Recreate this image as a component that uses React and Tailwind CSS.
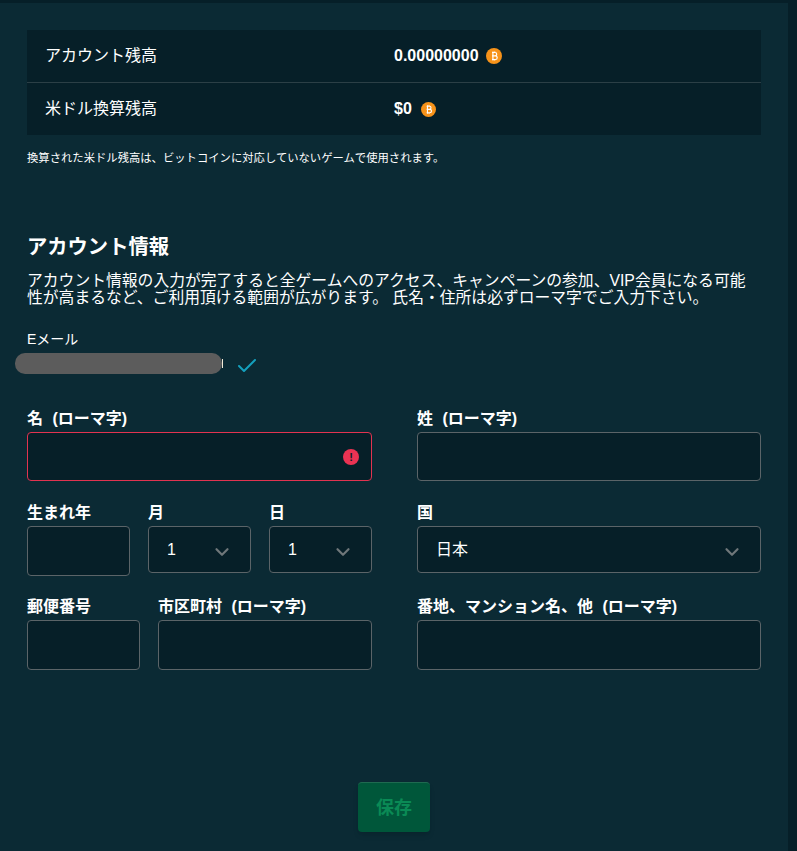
import { Check, ChevronDown } from 'lucide-react';

const font = { fontFamily: '"Liberation Sans", "Noto Sans CJK JP", sans-serif' };

function BitcoinIcon({ className = 'w-4 h-4' }) {
  return (
    <svg viewBox="0 0 16 16" className={`shrink-0 ${className}`}>
      <circle cx="8" cy="8" r="8" fill="#f7931a" />
      <path
        d="M6 4.5h3a1.7 1.7 0 0 1 0 3.4H6m0 0h3.4a1.8 1.8 0 0 1 0 3.6H6M6.9 4.5v7M7 3.4v1.1m1.7-1.1v1.1M7 11.5v1.1m1.7-1.1v1.1"
        fill="none"
        stroke="#fff"
        strokeWidth="1.2"
      />
    </svg>
  );
}

function Label({ children }) {
  return <label className="block h-[14px] leading-[16px] text-base font-bold text-white whitespace-nowrap [word-spacing:5px]">{children}</label>;
}

function TextInput({ className = 'h-[50px]' }) {
  return <div className={`mt-[7px] w-full rounded border border-[#5b6468] bg-[#061f28] ${className}`} />;
}

function SelectBox({ value }) {
  return (
    <div className="relative mt-[7px] h-[47px] w-full rounded border border-[#5b6468] bg-[#061f28] text-base text-white">
      <span className="absolute left-[18px] top-[15px] leading-4">{value}</span>
      <ChevronDown className="absolute right-[17px] top-[14px] w-[22px] h-[22px] text-[#6f777a]" strokeWidth={2.4} />
    </div>
  );
}

export default function App() {
  return (
    <div className="min-h-[851px] bg-[#061f28] pr-[9px] overflow-hidden" style={font}>
      <div className="h-[851px] mt-[3px] bg-[#0b2a34] pl-[27px] pr-[27px] pt-[27px] text-white">
        {/* Balance */}
        <div className="bg-[#061f28] text-base">
          <div className="flex items-center h-[53px] pl-[18px] border-b border-[#2b3f46]">
            <span className="w-[349px]">アカウント残高</span>
            <span className="font-bold mr-[7px]">0.00000000</span>
            <BitcoinIcon />
          </div>
          <div className="flex items-center h-[52px] pl-[18px]">
            <span className="w-[349px]">米ドル換算残高</span>
            <span className="font-bold mr-[9px]">$0</span>
            <BitcoinIcon className="w-[15px] h-[15px]" />
          </div>
        </div>
        <p className="mt-4 text-[11.33px] leading-[14px]">換算された米ドル残高は、ビットコインに対応していないゲームで使用されます。</p>

        {/* Account info */}
        <h2 className="mt-[70px] text-[20.3px] leading-6 font-bold">アカウント情報</h2>
        <p className="mt-[13px] text-[15.8px] leading-[17px]">
          アカウント情報の入力が完了すると全ゲームへのアクセス、キャンペーンの参加、VIP会員になる可能性が高まるなど、ご利用頂ける範囲が広がります。 氏名・住所は必ずローマ字でご入力下さい。
        </p>

        <div className="mt-[25px] text-sm leading-4">Eメール</div>
        <div className="flex items-center mt-[6px] -ml-3 h-[21px]">
          <div className="w-[207px] h-[21px] rounded-[10px] bg-[#5c5c5c]" />
          <div className="w-px h-[9px] bg-[#f2ead8]" />
          <Check className="ml-3 mt-1 w-[24px] h-[24px] text-[#14a0bd]" strokeWidth={2} />
        </div>

        <div className="mt-[37px] grid grid-cols-[345px_344px] gap-x-[45px]">
          <div>
            <Label>名 (ローマ字)</Label>
            <div className="relative mt-[7px] h-[49px] rounded border border-[#e23350] bg-[#061f28]">
              <span className="absolute right-[12px] top-[16px] flex items-center justify-center w-4 h-4 rounded-full bg-[#ea3353] text-[11px] font-bold leading-none text-[#061f28]">!</span>
            </div>
          </div>
          <div>
            <Label>姓 (ローマ字)</Label>
            <TextInput className="h-[49px]" />
          </div>

          <div className="mt-[24px] grid grid-cols-3 gap-x-[18px]">
            <div>
              <Label>生まれ年</Label>
              <TextInput />
            </div>
            <div>
              <Label>月</Label>
              <SelectBox value="1" />
            </div>
            <div>
              <Label>日</Label>
              <SelectBox value="1" />
            </div>
          </div>
          <div className="mt-[24px]">
            <Label>国</Label>
            <SelectBox value="日本" />
          </div>

          <div className="mt-[23px] grid grid-cols-[113px_214px] gap-x-[18px]">
            <div>
              <Label>郵便番号</Label>
              <TextInput />
            </div>
            <div>
              <Label>市区町村 (ローマ字)</Label>
              <TextInput />
            </div>
          </div>
          <div className="mt-[23px]">
            <Label>番地、マンション名、他 (ローマ字)</Label>
            <TextInput />
          </div>
        </div>

        <div className="mt-[112px] flex justify-center">
          <button className="w-[72px] h-[50px] rounded bg-[#00573a] border-t border-[#1f6a50] text-lg font-bold text-[#0a8a55] shadow-md">
            保存
          </button>
        </div>
      </div>
    </div>
  );
}
